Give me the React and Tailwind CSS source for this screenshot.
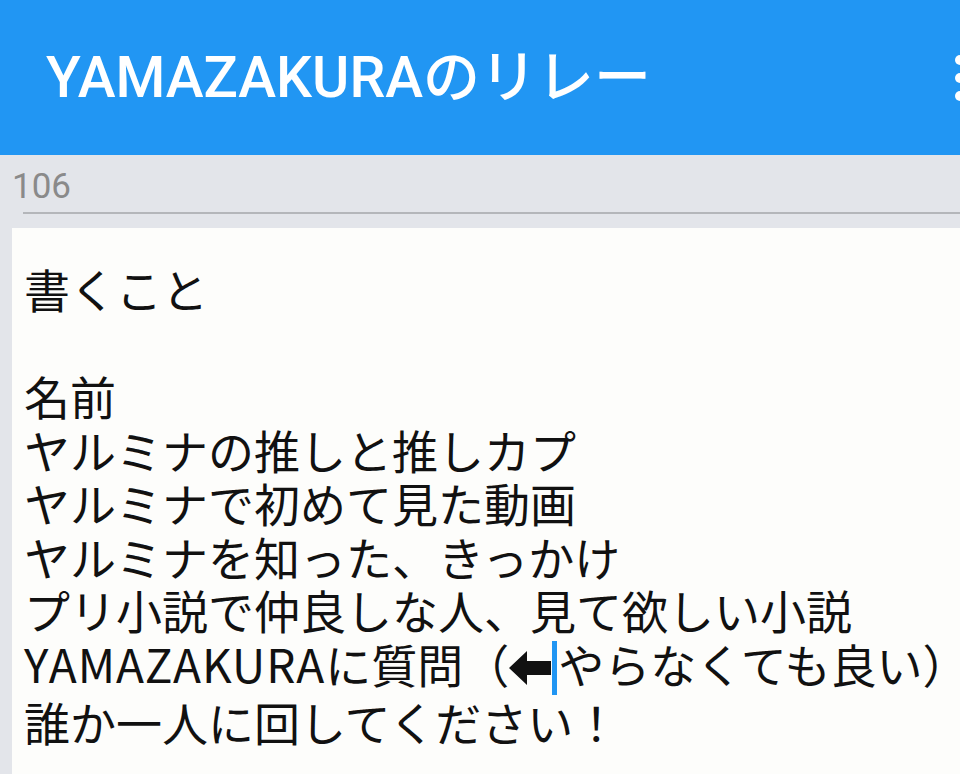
import React from 'react';

const jp = { fontFamily: '"Noto Sans CJK JP", "Noto Sans", sans-serif' };

const Latin = ({ children }) => (
    <span className="tracking-[1px]">{children}</span>
);

const LeftArrow = () => (
    <svg
        className="inline-block h-[34px] w-[42px] align-[-2px]"
        viewBox="0 0 42 34"
        fill="#111"
    >
        <path d="M0 17 L18 0 L18 10 L42 10 L42 24 L18 24 L18 34 Z" />
    </svg>
);

const App = () => {
    const lines = [
        '名前',
        'ヤルミナの推しと推しカプ',
        'ヤルミナで初めて見た動画',
        'ヤルミナを知った、きっかけ',
        'プリ小説で仲良しな人、見て欲しい小説',
    ];

    return (
        <div className="flex h-[774px] w-[960px] flex-col overflow-hidden bg-[#e3e5ea]">
            {/* app bar */}
            <div className="flex h-[155px] shrink-0 items-center bg-[#2196f3] pl-[46px]">
                <h1
                    className="text-[57px] font-medium leading-none text-white"
                    style={{ fontFamily: 'Roboto, "Noto Sans CJK JP", sans-serif' }}
                >
                    YAMAZAKURAのリレー
                </h1>
                <div className="ml-auto mr-[-6px] flex flex-col gap-[8px]">
                    <span className="block h-[10px] w-[11px] rounded-full bg-white" />
                    <span className="block h-[10px] w-[11px] rounded-full bg-white" />
                    <span className="block h-[10px] w-[11px] rounded-full bg-white" />
                </div>
            </div>

            {/* title field */}
            <div className="h-[73px] shrink-0 pl-[12px]">
                <div
                    className="pt-[12px] text-[35px] leading-[40px] text-[#8a8a8a]"
                    style={{ fontFamily: 'Roboto, sans-serif' }}
                >
                    106
                </div>
                <div className="ml-[11px] mt-[5px] h-[2px] bg-[#b4b6ba]" />
            </div>

            {/* body */}
            <div className="ml-[12px] flex-1 bg-[#fdfdfb] pl-[12px] pt-[34px]">
                <div className="text-[46px] leading-[53.5px] text-[#111]" style={jp}>
                    <div>書くこと</div>
                    <div>&nbsp;</div>
                    {lines.map((l) => (
                        <div key={l}>{l}</div>
                    ))}
                    <div className="whitespace-nowrap">
                        <Latin>YAMAZAKURA</Latin>に質問（
                        <LeftArrow />
                        <span className="mx-[1px] inline-block h-[54px] w-[5px] bg-[#2196f3] align-[-12px]" />
                        やらなくても良い）
                    </div>
                    <div>誰か一人に回してください！</div>
                </div>
            </div>
        </div>
    );
};

export default App;
